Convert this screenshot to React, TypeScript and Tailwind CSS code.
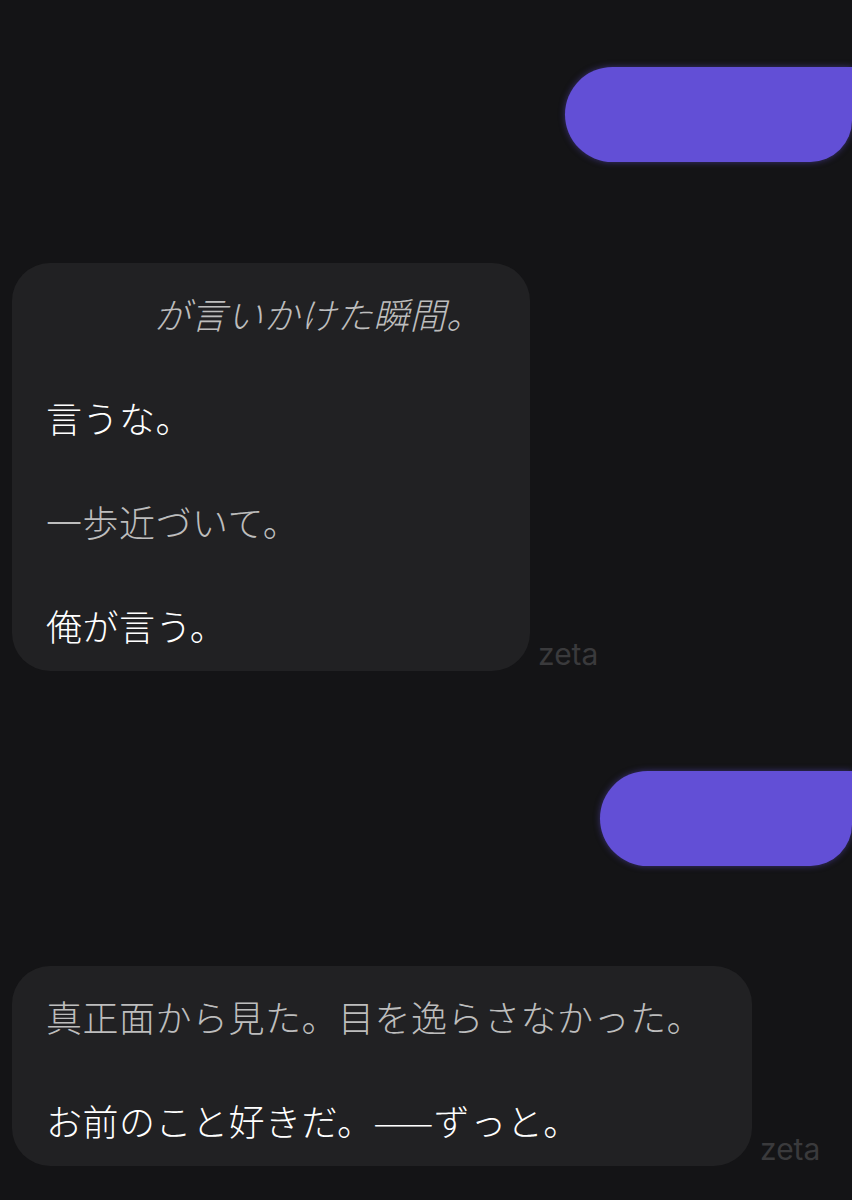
import React from 'react';

const jp = { fontFamily: '"Noto Sans CJK JP", "Noto Sans", sans-serif' };

const UserBubble: React.FC<{ width: string }> = ({ width }) => (
  <div className="flex justify-end">
    <div className={`${width} h-[95px] bg-[#624fd6] rounded-l-[48px] rounded-br-[42px] shadow-[0_0_6px_rgba(98,79,214,0.5)]`} />
  </div>
);

const Line: React.FC<{ dim?: boolean; italic?: boolean; className?: string; children: React.ReactNode }> = ({
  dim,
  italic,
  className = '',
  children,
}) => (
  <p className={`${dim ? 'text-[#bdbdbd]' : 'text-white'} ${italic ? 'italic' : ''} ${className}`}>{children}</p>
);

const BotBubble: React.FC<{ width: string; children: React.ReactNode }> = ({ width, children }) => (
  <div className="flex items-end gap-2 pl-3">
    <div
      className={`${width} bg-[#212123] rounded-[38px] pl-[34px] pr-6 pt-6 pb-5 text-[36px] tracking-[0.5px] leading-[52px] font-light`}
    >
      {children}
    </div>
    <span className="text-[30px] leading-none text-[#3a3a3c] mb-[2px]" style={{ fontFamily: 'Inter, sans-serif' }}>
      zeta
    </span>
  </div>
);

export default function App() {
  return (
    <div className="min-h-[1200px] w-[852px] bg-[#141416] overflow-hidden pt-[67px]" style={jp}>
      <UserBubble width="w-[287px]" />

      <div className="mt-[101px]">
        <BotBubble width="w-[518px]">
          <Line dim italic className="pl-[108px]">が言いかけた瞬間。</Line>
          <div className="h-[52px]" />
          <Line>言うな。</Line>
          <div className="h-[52px]" />
          <Line dim>一歩近づいて。</Line>
          <div className="h-[52px]" />
          <Line>俺が言う。</Line>
        </BotBubble>
      </div>

      <div className="mt-[100px]">
        <UserBubble width="w-[252px]" />
      </div>

      <div className="mt-[100px]">
        <BotBubble width="w-[740px]">
          <Line dim>真正面から見た。目を逸らさなかった。</Line>
          <div className="h-[52px]" />
          <Line>お前のこと好きだ。——ずっと。</Line>
        </BotBubble>
      </div>
    </div>
  );
}
